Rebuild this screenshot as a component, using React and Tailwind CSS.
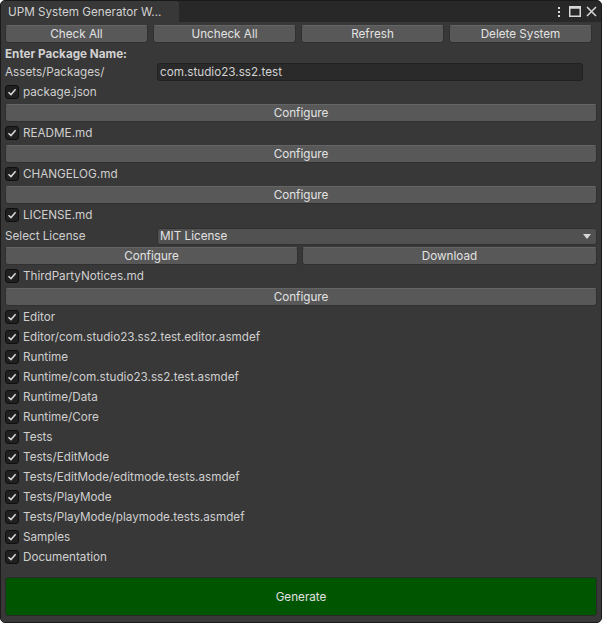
import React from "react";

const Check = () => (
    <svg width="10" height="10" viewBox="0 0 10 10">
        <polyline points="1.5,5.2 4,7.6 8.6,2.2" fill="none" stroke="#d8d8d8" strokeWidth="1.5" />
    </svg>
);

const Toggle = ({ label }) => (
    <div className="flex items-center h-[18px] mt-[2px]">
        <div className="w-[14px] h-[14px] rounded-[3px] bg-[#202020] border border-[#0f0f0f] flex items-center justify-center">
            <Check />
        </div>
        <span className="ml-[4px] pt-[2px] text-[#cfcfcf]">{label}</span>
    </div>
);

const Button = ({ children, className = "" }) => (
    <div
        className={`h-[18px] pt-[2px] rounded-[3px] bg-[#585858] border border-[#303030] border-t-[#656565] flex items-center justify-center text-[#e2e2e2] ${className}`}
    >
        {children}
    </div>
);

const folders = [
    "Editor",
    "Editor/com.studio23.ss2.test.editor.asmdef",
    "Runtime",
    "Runtime/com.studio23.ss2.test.asmdef",
    "Runtime/Data",
    "Runtime/Core",
    "Tests",
    "Tests/EditMode",
    "Tests/EditMode/editmode.tests.asmdef",
    "Tests/PlayMode",
    "Tests/PlayMode/playmode.tests.asmdef",
    "Samples",
    "Documentation",
];

export default function App() {
    return (
        <div className="w-[602px] h-[623px] bg-[#282828] border border-[#1a1a1a] rounded-[5px] overflow-hidden flex flex-col text-[11.7px] font-['Inter','Noto_Sans',sans-serif]">
            {/* tab bar */}
            <div className="h-[21px] flex items-stretch">
                <div className="w-[178px] bg-[#383838] rounded-tr-[3px] flex items-center pl-[7px] pt-[2px] text-[#d2d2d2]">
                    UPM System Generator W...
                </div>
                <div className="flex-1" />
                <div className="flex items-center gap-[5px] pr-[4px]">
                    <svg width="4" height="12" viewBox="0 0 4 12">
                        <rect x="1" y="1" width="2" height="2" fill="#d8d8d8" />
                        <rect x="1" y="5" width="2" height="2" fill="#d8d8d8" />
                        <rect x="1" y="9" width="2" height="2" fill="#d8d8d8" />
                    </svg>
                    <svg width="12" height="11" viewBox="0 0 12 11" className="ml-[3px]">
                        <rect x="0.75" y="0.75" width="10.5" height="9.5" fill="none" stroke="#d8d8d8" strokeWidth="1.5" />
                        <rect x="0.75" y="0.75" width="10.5" height="2" fill="#d8d8d8" />
                    </svg>
                    <svg width="11" height="11" viewBox="0 0 11 11">
                        <path d="M1 1 L10 10 M10 1 L1 10" stroke="#d8d8d8" strokeWidth="1.5" />
                    </svg>
                </div>
            </div>

            {/* content */}
            <div className="flex-1 bg-[#383838] pl-[4px] pr-[4px] pt-[3px] flex flex-col">
                <div className="flex gap-[5px] mr-[5px]">
                    <Button className="flex-1">Check All</Button>
                    <Button className="flex-1">Uncheck All</Button>
                    <Button className="flex-1">Refresh</Button>
                    <Button className="flex-1">Delete System</Button>
                </div>

                <div className="h-[18px] mt-[2px] pt-[2px] flex items-center font-bold text-[#d2d2d2]">
                    Enter Package Name:
                </div>

                <div className="h-[18px] flex items-center">
                    <span className="w-[152px] pt-[2px] text-[#cfcfcf]">Assets/Packages/</span>
                    <div className="flex-1 mr-[14px] h-[18px] pt-[2px] rounded-[3px] bg-[#2a2a2a] border border-[#212121] flex items-center pl-[2px] text-[#d2d2d2]">
                        com.studio23.ss2.test
                    </div>
                </div>

                <Toggle label="package.json" />
                <Button className="mt-[3px]">Configure</Button>
                <Toggle label="README.md" />
                <Button className="mt-[3px]">Configure</Button>
                <Toggle label="CHANGELOG.md" />
                <Button className="mt-[3px]">Configure</Button>
                <Toggle label="LICENSE.md" />

                <div className="h-[18px] mt-[3px] flex items-center">
                    <span className="w-[152px] pt-[2px] text-[#cfcfcf]">Select License</span>
                    <div className="flex-1 h-[17px] rounded-[3px] bg-[#515151] border border-[#303030] flex items-center justify-between pl-[2px] pr-[5px] text-[#e2e2e2]">
                        <span className="pt-[1px]">MIT License</span>
                        <svg width="8" height="5" viewBox="0 0 8 5">
                            <polygon points="0,0 8,0 4,5" fill="#d8d8d8" />
                        </svg>
                    </div>
                </div>

                <div className="flex gap-[4px] mt-[2px]">
                    <Button className="w-[293px]">Configure</Button>
                    <Button className="flex-1">Download</Button>
                </div>

                <Toggle label="ThirdPartyNotices.md" />
                <Button className="mt-[3px]">Configure</Button>

                {folders.map((f) => (
                    <Toggle key={f} label={f} />
                ))}

                <div className="mt-[11px] h-[39px] pt-[2px] rounded-[3px] bg-[#005500] border border-[#2a2a2a] flex items-center justify-center text-[#e0e0e0]">
                    Generate
                </div>
            </div>
        </div>
    );
}
